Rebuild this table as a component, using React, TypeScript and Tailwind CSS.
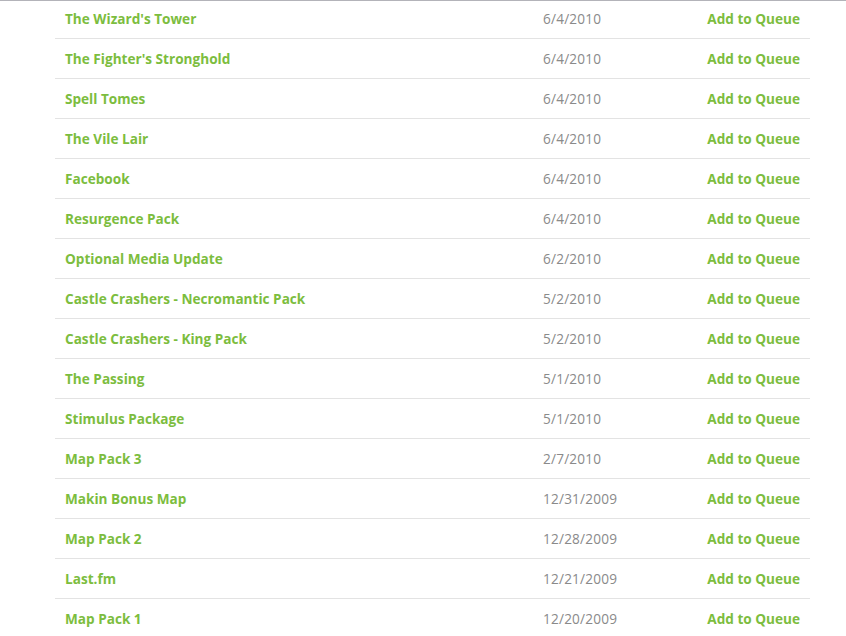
import React from 'react';

const items: [string, string][] = [
  ["The Wizard's Tower", '6/4/2010'],
  ["The Fighter's Stronghold", '6/4/2010'],
  ['Spell Tomes', '6/4/2010'],
  ['The Vile Lair', '6/4/2010'],
  ['Facebook', '6/4/2010'],
  ['Resurgence Pack', '6/4/2010'],
  ['Optional Media Update', '6/2/2010'],
  ['Castle Crashers - Necromantic Pack', '5/2/2010'],
  ['Castle Crashers - King Pack', '5/2/2010'],
  ['The Passing', '5/1/2010'],
  ['Stimulus Package', '5/1/2010'],
  ['Map Pack 3', '2/7/2010'],
  ['Makin Bonus Map', '12/31/2009'],
  ['Map Pack 2', '12/28/2009'],
  ['Last.fm', '12/21/2009'],
  ['Map Pack 1', '12/20/2009'],
];

export default function App() {
  return (
    <div className="w-[846px] h-[636px] overflow-hidden bg-white border-t border-[#b3b3b9] font-['Open_Sans',sans-serif] text-[13.6px]">
      <div className="ml-[55px] w-[755px] -mt-[2px]">
        {items.map(([name, date], i) => (
          <div key={i} className="flex items-center h-[40px] border-b border-[#e3e3e3] px-[10px] pt-[2px]">
            <a className="w-[478px] font-bold text-[#7cbd3e]">{name}</a>
            <span className="flex-1 text-[#8a8a8a] tracking-[0.2px]">{date}</span>
            <a className="font-bold text-[#7cbd3e]">Add to Queue</a>
          </div>
        ))}
      </div>
    </div>
  );
}
